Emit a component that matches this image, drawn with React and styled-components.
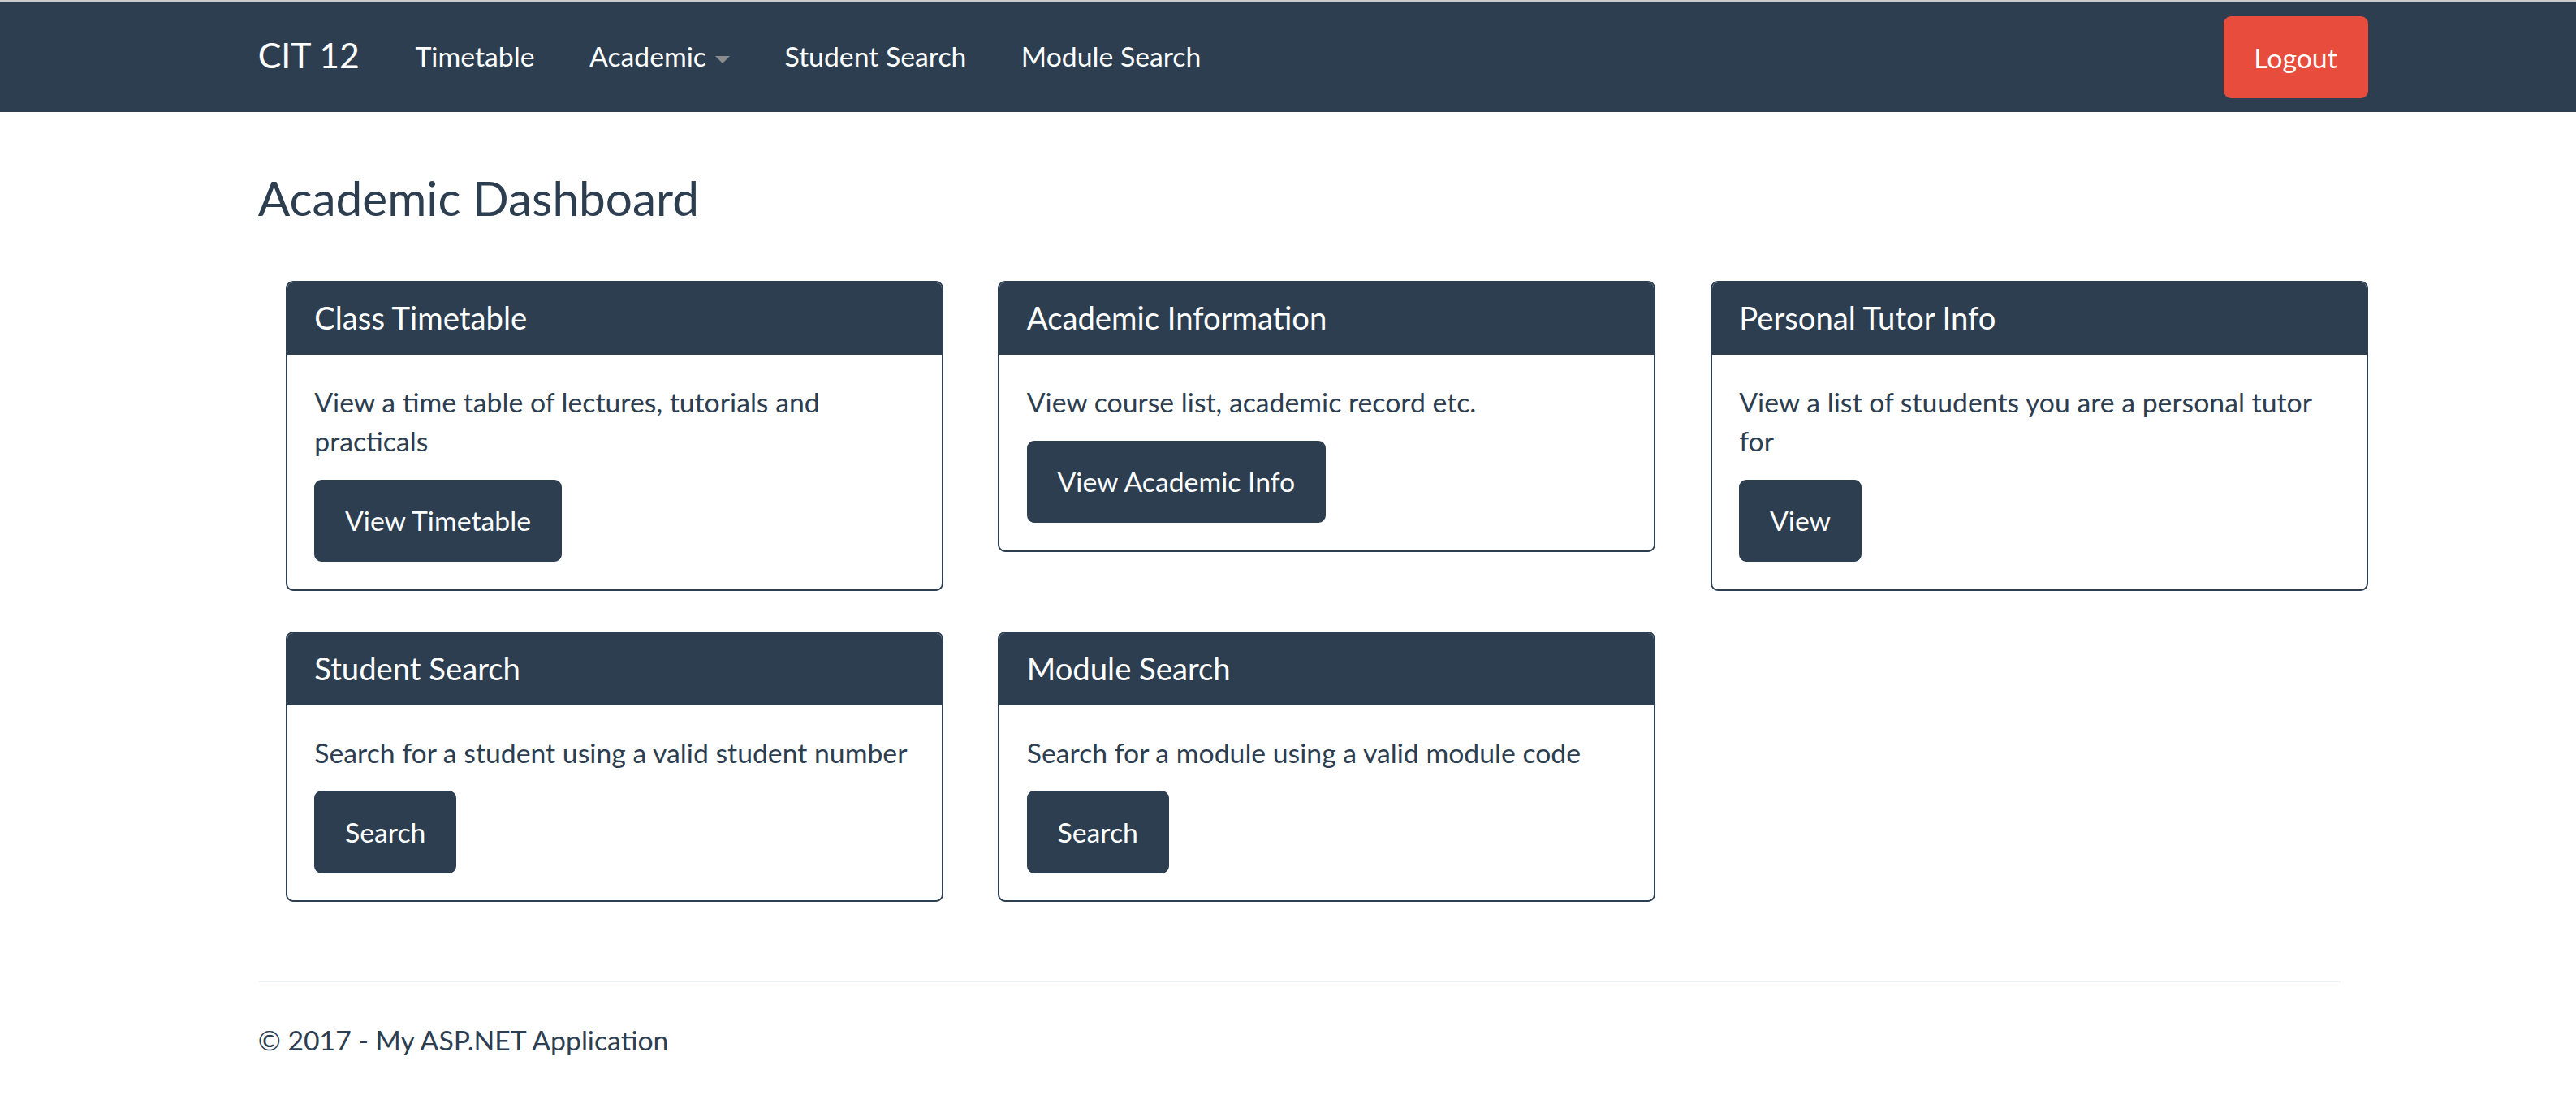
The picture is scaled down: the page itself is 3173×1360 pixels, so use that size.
import React from 'react';
import styled, { createGlobalStyle } from 'styled-components';

const navy = '#2c3e50';

const GlobalStyle = createGlobalStyle`
  html, body {
    margin: 0;
    padding: 0;
    background: #ffffff;
  }
  body {
    font-family: Lato, "Open Sans", "Liberation Sans", sans-serif;
    font-size: 33.75px;
    line-height: 1.42857;
    color: ${navy};
    border-top: 2px solid #cbcbcb;
  }
  * {
    box-sizing: border-box;
  }
`;

const Navbar = styled.nav`
  background: ${navy};
  height: 136px;
`;

const Container = styled.div`
  width: 2632.5px;
  margin-left: 284px;
  padding: 0 33.75px;
`;

const NavInner = styled(Container)`
  display: flex;
  align-items: flex-start;
  height: 100%;
`;

const Brand = styled.a`
  display: block;
  margin-left: -33.75px;
  padding: 42px 35px 42px 33.75px;
  height: 135px;
  font-size: 42.75px;
  line-height: 47.25px;
  color: #ffffff;
  text-decoration: none;
`;

const NavList = styled.ul`
  display: flex;
  list-style: none;
  margin: 0;
  padding: 0;
`;

const NavLink = styled.a`
  display: block;
  padding: 43.9px 33.75px;
  line-height: 47.25px;
  color: #ffffff;
  text-decoration: none;
`;

const Caret = styled.span`
  display: inline-block;
  width: 0;
  height: 0;
  margin-left: 11px;
  vertical-align: middle;
  border-top: 9px solid #8c8c8c;
  border-left: 9px solid transparent;
  border-right: 9px solid transparent;
`;

const NavRight = styled.div`
  margin-left: auto;
  margin-right: -33.75px;
  padding-top: 18px;
`;

const Button = styled.a`
  display: inline-block;
  padding: 22.5px 33.75px;
  font-size: 33.75px;
  line-height: 1.42857;
  color: #ffffff;
  background: ${(p) => (p.$danger ? '#e74c3c' : navy)};
  border: 4.5px solid ${(p) => (p.$danger ? '#e74c3c' : navy)};
  border-radius: 9px;
  text-decoration: none;
  white-space: nowrap;
`;

const Title = styled.h3`
  margin: 73px 0 70.6px;
  font-size: 58.5px;
  line-height: 1.1;
  font-weight: 400;
`;

const Grid = styled.div`
  display: grid;
  grid-template-columns: repeat(3, 877.5px);
  align-items: start;
`;

const Col = styled.div`
  padding: 0 33.75px;
`;

const Panel = styled.div`
  margin-bottom: 50px;
  border: 2.25px solid ${navy};
  border-radius: 9px;
  background: #ffffff;
  overflow: hidden;
`;

const PanelHeading = styled.div`
  padding: 22.5px 33.75px;
  background: ${navy};
  color: #ffffff;
  border-bottom: 2.25px solid transparent;
`;

const PanelTitle = styled.h3`
  margin: 0;
  font-size: 38.25px;
  line-height: 1.1;
  font-weight: 400;
`;

const PanelBody = styled.div`
  padding: 33.75px;
`;

const Text = styled.p`
  margin: 0 0 23.6px;
`;

const Rule = styled.hr`
  margin: 47px 0;
  border: 0;
  border-top: 2px solid #ecf0f1;
`;

const Footer = styled.footer`
  p {
    margin: 0 0 23.6px;
  }
`;

const cards = [
  {
    title: 'Class Timetable',
    text: 'View a time table of lectures, tutorials and practicals',
    action: 'View Timetable',
  },
  {
    title: 'Academic Information',
    text: 'View course list, academic record etc.',
    action: 'View Academic Info',
  },
  {
    title: 'Personal Tutor Info',
    text: 'View a list of stuudents you are a personal tutor for',
    action: 'View',
  },
  {
    title: 'Student Search',
    text: 'Search for a student using a valid student number',
    action: 'Search',
  },
  {
    title: 'Module Search',
    text: 'Search for a module using a valid module code',
    action: 'Search',
  },
];

export default function App() {
  return (
    <>
      <GlobalStyle />
      <Navbar>
        <NavInner>
          <Brand href="#">CIT 12</Brand>
          <NavList>
            <li><NavLink href="#">Timetable</NavLink></li>
            <li>
              <NavLink href="#">
                Academic<Caret />
              </NavLink>
            </li>
            <li><NavLink href="#">Student Search</NavLink></li>
            <li><NavLink href="#">Module Search</NavLink></li>
          </NavList>
          <NavRight>
            <Button $danger href="#">Logout</Button>
          </NavRight>
        </NavInner>
      </Navbar>

      <Container>
        <Title>Academic Dashboard</Title>
        <Grid>
          {cards.map((card) => (
            <Col key={card.title}>
              <Panel>
                <PanelHeading>
                  <PanelTitle>{card.title}</PanelTitle>
                </PanelHeading>
                <PanelBody>
                  <Text>{card.text}</Text>
                  <Button href="#">{card.action}</Button>
                </PanelBody>
              </Panel>
            </Col>
          ))}
        </Grid>
        <Rule />
        <Footer>
          <p>&copy; 2017 - My ASP.NET Application</p>
        </Footer>
      </Container>
    </>
  );
}
